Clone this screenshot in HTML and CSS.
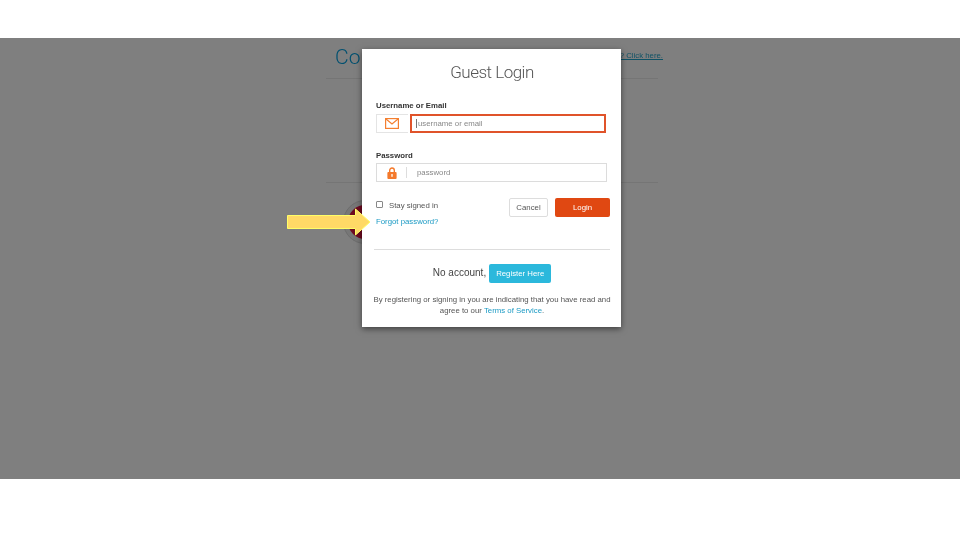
FILE: index.html
```html
<!DOCTYPE html>
<html lang="en">
<head>
<meta charset="utf-8">
<title>Guest Login</title>
<link rel="stylesheet" href="styles.css">
</head>
<body>
<main class="band">
  <div class="backdrop">
    <header class="bg-head">
      <h1 class="bg-title">Connect</h1>
      <a class="bg-link" href="#">? Click here.</a>
    </header>
    <div class="bg-spacer"></div>
    <div class="bg-rule"></div>
    <div class="bg-seal"><span class="bg-seal-core"></span></div>
  </div>

  <section class="modal">
    <h2 class="modal-title">Guest Login</h2>

    <label class="field-label">Username or Email</label>
    <div class="input-group">
      <span class="addon addon-mail">
        <svg viewBox="0 0 14 11" width="14" height="11"><rect x="0.6" y="0.6" width="12.8" height="9.8" fill="none" stroke="#f47f30" stroke-width="1.2"/><path d="M1 1l6 5 6-5" fill="none" stroke="#f47f30" stroke-width="1.2"/></svg>
      </span>
      <div class="input input-focus"><span class="caret"></span>username or email</div>
    </div>

    <label class="field-label field-label-second">Password</label>
    <div class="input-group input-group-plain">
      <span class="addon addon-lock">
        <svg viewBox="0 0 10 13" width="10" height="12"><path d="M2.5 6V3.6a2.5 2.5 0 0 1 5 0V6" fill="none" stroke="#f4792b" stroke-width="1.5"/><rect x="0" y="5.4" width="10" height="7.6" rx="1" fill="#f4792b"/><rect x="4.3" y="7.6" width="1.4" height="3" fill="#fff"/></svg>
      </span>
      <div class="input input-plain">password</div>
    </div>

    <div class="actions">
      <div class="options">
        <label class="stay"><span class="checkbox"></span>Stay signed in</label>
        <a class="forgot" href="#">Forgot password?</a>
      </div>
      <div class="buttons">
        <button class="btn btn-cancel" type="button">Cancel</button>
        <button class="btn btn-login" type="button">Login</button>
      </div>
    </div>

    <hr class="divider">

    <div class="register">
      <span class="register-text">No account,</span>
      <button class="btn btn-register" type="button">Register Here</button>
    </div>

    <p class="terms">By registering or signing in you are indicating that you have read and agree to our <a href="#">Terms of Service</a>.</p>
  </section>

  <svg class="arrow" viewBox="0 0 84 30" width="84" height="30"><path d="M0.5 8.5H68.5V2L83 15L68.5 28V21.5H0.5Z" fill="#ffd966" stroke="#ffff66" stroke-width="1"/></svg>
</main>
</body>
</html>
```
FILE: styles.css
```css
* { box-sizing: border-box; }
html, body { margin: 0; padding: 0; }
body {
  width: 960px;
  height: 540px;
  background: #fff;
  padding-top: 38px;
  overflow: hidden;
  font-family: "Liberation Sans", Arial, sans-serif;
  color: #444;
}
.band {
  position: relative;
  height: 441px;
  background: #7f7f7f;
  filter: blur(0.4px);
}
.backdrop {
  width: 332px;
  margin-left: 326px;
  display: flex;
  flex-direction: column;
}
.bg-head {
  height: 41px;
  border-bottom: 1px solid #757575;
  display: flex;
  justify-content: flex-end;
  position: relative;
}
.bg-title {
  position: absolute;
  left: 9px;
  top: 5px;
  margin: 0;
  font-family: Roboto, "Liberation Sans", sans-serif;
  font-weight: 300;
  font-size: 21px;
  line-height: 28px;
  color: #005070;
}
.bg-link {
  font-size: 7.8px;
  line-height: 10px;
  margin-top: 13px;
  margin-right: -5px;
  color: #0f5266;
  text-decoration: underline;
}
.bg-spacer { height: 103px; }
.bg-rule { height: 1px; background: #757575; }
.bg-seal {
  width: 44px;
  height: 44px;
  margin: 17px 0 0 17px;
  border-radius: 50%;
  border: 1px solid #6d6d6d;
  background: #777;
  display: flex;
  align-items: center;
  justify-content: center;
}
.bg-seal-core {
  width: 34px;
  height: 34px;
  border-radius: 50%;
  background: #6e0a20;
}
.modal {
  position: absolute;
  left: 362px;
  top: 11px;
  width: 259px;
  height: 278px;
  background: #fff;
  box-shadow: 0 2px 6px rgba(0, 0, 0, 0.5);
  padding: 12px 11px 0 12px;
  display: flex;
  flex-direction: column;
}
.modal-title {
  margin: 0;
  text-align: center;
  font-family: Roboto, "Liberation Sans", sans-serif;
  font-weight: 300;
  font-size: 17px;
  letter-spacing: -0.5px;
  line-height: 22px;
  color: #555;
}
.field-label {
  display: block;
  margin: 18px 0 0 2px;
  font-size: 7.8px;
  font-weight: 700;
  line-height: 10px;
  color: #333;
}
.input-group {
  display: flex;
  align-items: stretch;
  margin: 3px 4px 0 2px;
  height: 19px;
}
.input-group-plain {
  border: 1px solid #dcdcdc;
  margin: 2px 3px 0 2px;
}
.addon {
  display: flex;
  align-items: center;
  justify-content: center;
  flex: none;
}
.addon-mail {
  width: 32px;
  border: 1px solid #e4e4e4;
  border-right: 0;
  margin-right: 2px;
  padding-right: 1px;
}
.addon-lock {
  width: 30px;
  position: relative;
}
.addon-lock::after {
  content: "";
  position: absolute;
  right: 0;
  top: 3px;
  bottom: 3px;
  width: 1px;
  background: #ddd;
}
.input {
  flex: 1;
  display: flex;
  align-items: center;
  font-size: 7.8px;
  color: #888;
}
.input-focus {
  border: 2px solid #e0532a;
  padding-left: 4px;
}
.input-plain { padding-left: 10px; }
.caret {
  width: 1px;
  height: 9px;
  background: #777;
  margin-right: 1px;
}
.actions {
  display: flex;
  justify-content: space-between;
  margin: 16px 0 0 2px;
}
.options { display: flex; flex-direction: column; padding-top: 3px; }
.stay {
  display: flex;
  align-items: center;
  font-size: 7.8px;
  line-height: 10px;
  color: #555;
}
.checkbox {
  width: 7px;
  height: 7px;
  border: 1px solid #888;
  border-radius: 1px;
  margin-right: 6px;
  margin-bottom: 3px;
}
.forgot {
  margin-top: 6px;
  font-size: 7.8px;
  line-height: 10px;
  color: #1b9ac4;
  text-decoration: none;
}
.buttons { display: flex; gap: 7px; }
.btn {
  height: 19px;
  padding: 0;
  font-family: inherit;
  font-size: 7.8px;
  border-radius: 2px;
  border: 1px solid transparent;
}
.btn-cancel {
  width: 39px;
  background: #fff;
  border-color: #ddd;
  color: #555;
}
.btn-login {
  width: 55px;
  background: #e04812;
  color: #fff;
}
.divider {
  width: 236px;
  margin: 22px 0 0;
  border: 0;
  border-top: 1px solid #ddd;
}
.register {
  display: flex;
  align-items: center;
  justify-content: center;
  gap: 3px;
  margin-top: 14px;
  font-size: 10px;
  color: #444;
}
.register-text { padding-bottom: 2px; }
.btn-register {
  width: 62px;
  background: #2bb8dc;
  color: #fff;
}
.terms {
  margin: 11px 0 0 -2px;
  width: 240px;
  text-align: center;
  font-size: 7.8px;
  line-height: 11px;
  color: #555;
}
.terms a { color: #1b9ac4; text-decoration: none; }
.arrow {
  position: absolute;
  left: 287px;
  top: 169px;
}
```
